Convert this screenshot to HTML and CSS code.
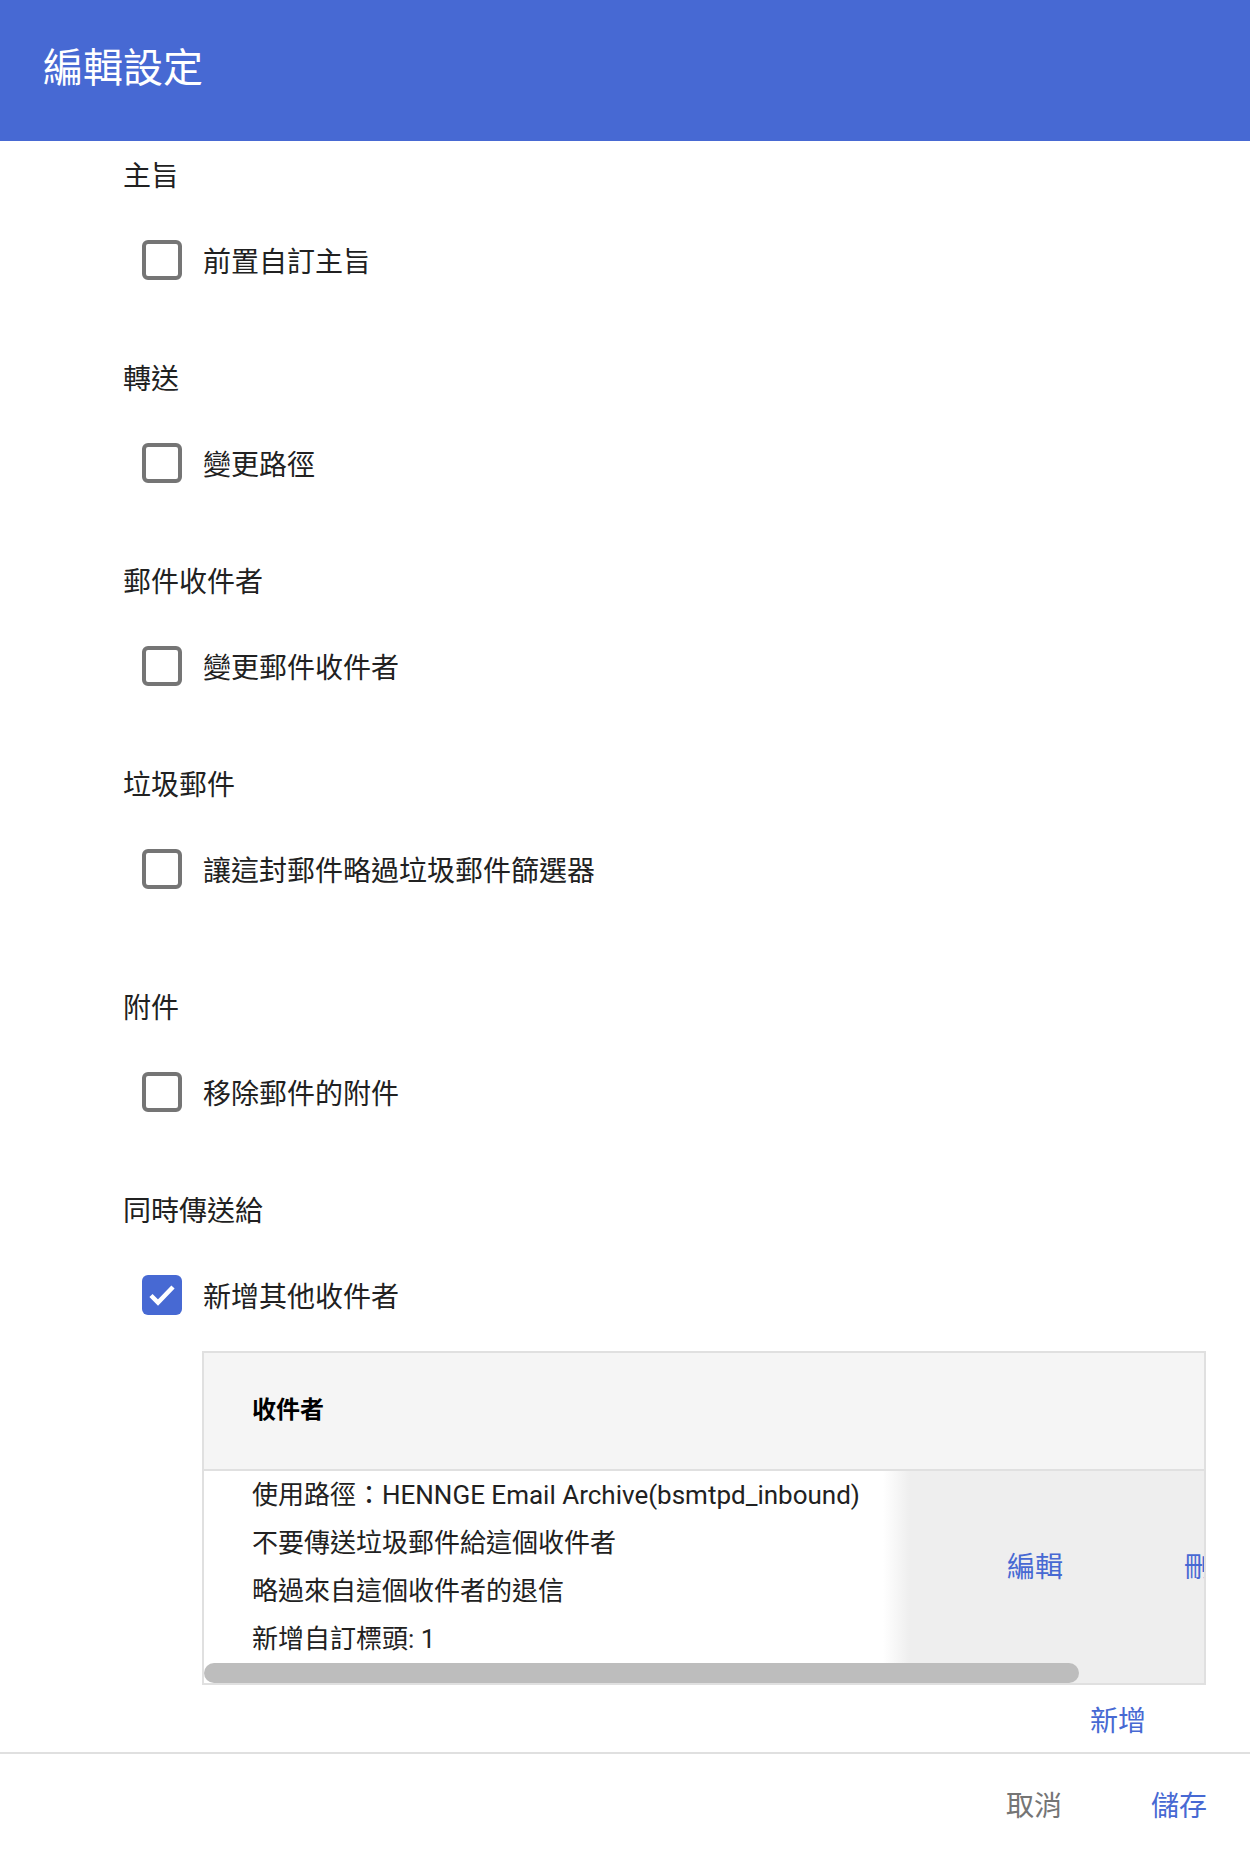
FILE: index.html
```html
<!DOCTYPE html>
<html lang="zh-Hant">
<head>
  <meta charset="UTF-8" />
  <meta name="viewport" content="width=device-width, initial-scale=1.0"/>
  <title>編輯設定</title>
  <link rel="stylesheet" href="styles.css">
</head>
<body>
  <header class="topbar">
    <h1>編輯設定</h1>
  </header>

  <main class="content">
    <section class="group">
      <div class="group-title">主旨</div>
      <label class="check-row">
        <span class="box"></span>
        <span>前置自訂主旨</span>
      </label>
    </section>

    <section class="group">
      <div class="group-title">轉送</div>
      <label class="check-row">
        <span class="box"></span>
        <span>變更路徑</span>
      </label>
    </section>

    <section class="group">
      <div class="group-title">郵件收件者</div>
      <label class="check-row">
        <span class="box"></span>
        <span>變更郵件收件者</span>
      </label>
    </section>

    <section class="group group-spam">
      <div class="group-title">垃圾郵件</div>
      <label class="check-row">
        <span class="box"></span>
        <span>讓這封郵件略過垃圾郵件篩選器</span>
      </label>
    </section>

    <section class="group">
      <div class="group-title">附件</div>
      <label class="check-row">
        <span class="box"></span>
        <span>移除郵件的附件</span>
      </label>
    </section>

    <section class="group group-last">
      <div class="group-title">同時傳送給</div>
      <label class="check-row">
        <span class="box checked">
          <svg viewBox="0 0 40 40" width="40" height="40"><polyline points="9,20.5 16,27.5 31,12" fill="none" stroke="#fff" stroke-width="4.5"/></svg>
        </span>
        <span>新增其他收件者</span>
      </label>

      <div class="rcpt-table">
        <div class="rcpt-head">
          <div class="rcpt-head-cell">收件者</div>
        </div>
        <div class="rcpt-row">
          <div class="rcpt-info">
            <div>使用路徑：HENNGE Email Archive(bsmtpd_inbound)</div>
            <div>不要傳送垃圾郵件給這個收件者</div>
            <div>略過來自這個收件者的退信</div>
            <div>新增自訂標頭: 1</div>
          </div>
          <div class="rcpt-actions">
            <a class="link">編輯</a>
            <a class="link">刪除</a>
          </div>
        </div>
        <div class="scroll-track">
          <div class="scroll-thumb"></div>
        </div>
      </div>

      <div class="add-row">
        <a class="link">新增</a>
      </div>
    </section>
  </main>

  <footer class="actions">
    <button class="btn btn-cancel">取消</button>
    <button class="btn btn-save">儲存</button>
  </footer>
</body>
</html>
```

FILE: styles.css
```css
body {
  margin: 0;
  font-family: Roboto, "Noto Sans CJK TC", sans-serif;
  color: #212121;
  background: #fff;
}
.topbar {
  height: 141px;
  background-color: #4769d3;
  display: flex;
  align-items: center;
  padding-left: 43px;
  box-sizing: border-box;
}
.topbar h1 {
  margin: 0 0 4px;
  font-size: 40px;
  font-weight: 400;
  color: #fff;
  line-height: 1;
}
.content {
  padding: 16px 44px 0 123px;
}
.group {
  margin-bottom: 72px;
}
.group-spam {
  margin-bottom: 92px;
}
.group-last {
  margin-bottom: 0;
}
.group-title {
  font-size: 28px;
  line-height: 40px;
  height: 40px;
  margin-bottom: 35px;
}
.check-row {
  display: flex;
  align-items: center;
  height: 56px;
  padding-left: 19px;
  font-size: 28px;
  gap: 21px;
}
.box {
  width: 40px;
  height: 40px;
  box-sizing: border-box;
  border: 4px solid #757575;
  border-radius: 6px;
  flex-shrink: 0;
}
.box.checked {
  border: none;
  background-color: #4769d3;
}
.box svg {
  display: block;
}
.rcpt-table {
  margin: 28px 0 0 79px;
  border: 2px solid #e0e0e0;
  overflow: hidden;
}
.rcpt-head {
  height: 118px;
  background-color: #f5f5f5;
  border-bottom: 2px solid #e0e0e0;
  display: flex;
  align-items: center;
  padding-bottom: 7px;
  box-sizing: border-box;
}
.rcpt-head-cell {
  padding-left: 48px;
  font-size: 24px;
  font-weight: 700;
  color: #000;
}
.rcpt-row {
  display: flex;
  height: 192px;
}
.rcpt-info {
  width: 679px;
  flex-shrink: 0;
  box-sizing: border-box;
  padding-left: 48px;
  font-size: 26px;
  line-height: 48px;
  white-space: nowrap;
}
.rcpt-actions {
  flex-shrink: 0;
  display: flex;
  align-items: center;
  gap: 121px;
  padding: 0 60px 5px 124px;
  background: linear-gradient(to right, rgba(238, 238, 238, 0), #eee 27px);
}
.link {
  color: #4769d3;
  font-size: 28px;
  cursor: pointer;
  white-space: nowrap;
}
.scroll-track {
  height: 20px;
  background: linear-gradient(to right, #fff 679px, #eee 706px);
}
.scroll-thumb {
  width: 875px;
  height: 20px;
  border-radius: 10px;
  background-color: #bdbdbd;
}
.add-row {
  height: 67px;
  display: flex;
  align-items: center;
  justify-content: flex-end;
  padding: 0 60px 0 0;
  box-sizing: border-box;
}
.actions {
  border-top: 2px solid #e0e0e0;
  height: 101px;
  box-sizing: border-box;
  display: flex;
  align-items: center;
  justify-content: flex-end;
  gap: 89px;
  padding: 0 43px 0 0;
}
.btn {
  background: none;
  border: none;
  padding: 0;
  font-family: inherit;
  font-size: 28px;
  cursor: pointer;
}
.btn-cancel {
  color: #757575;
}
.btn-save {
  color: #4769d3;
}
```
